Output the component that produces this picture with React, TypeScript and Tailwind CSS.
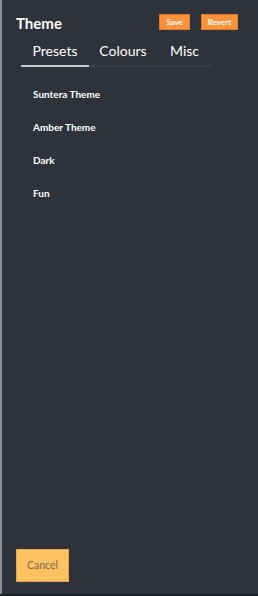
import { useState } from "react";

const presets = ["Suntera Theme", "Amber Theme", "Dark", "Fun"];
const tabs = ["Presets", "Colours", "Misc"];

export default function App() {
  const [tab, setTab] = useState(0);
  return (
    <div className="w-[258px] h-[596px] bg-[#1e2126] font-['Lato',sans-serif]">
      <div className="h-[594px] bg-[#2e323a] border-l-2 border-[#8a8d92] flex flex-col">
        {/* Header */}
        <div className="flex items-center pl-[14px] pr-5 pt-[14px] h-[30px]">
          <h2 className="text-white font-bold text-[15px] leading-none mt-[3px] flex-1">Theme</h2>
          <button className="bg-[#fb923c] border border-[#e07a2c] text-white font-bold text-[8px] h-4 w-[31px] leading-none">
            Save
          </button>
          <button className="bg-[#fb923c] border border-[#e07a2c] text-white font-bold text-[8px] h-4 w-[37px] ml-[11px] leading-none">
            Revert
          </button>
        </div>

        {/* Tabs */}
        <div className="ml-[19px] w-[191px] mt-[10px]">
          <div className="flex">
            {tabs.map((t, i) => (
              <button
                key={t}
                onClick={() => setTab(i)}
                className={`text-white text-[14px] leading-none h-[21px] pt-[1px] ${i === 2 ? "w-[55px]" : "w-[68px]"}`}
              >
                {t}
              </button>
            ))}
          </div>
          <div className="h-[2px] mt-[4px] bg-[#3a3d43] flex">
            <div className="h-[2px] w-[68px] bg-[#c9c9c9]" />
          </div>
        </div>

        {/* Presets list */}
        <div className="flex flex-col pl-[31px] pt-[22px] gap-[22px] flex-1">
          {tab === 0 &&
            presets.map((p) => (
              <div key={p} className="text-white font-bold text-[10px] leading-[11px]">
                {p}
              </div>
            ))}
        </div>

        {/* Footer */}
        <div className="pl-[14px] pb-[12px]">
          <button className="w-[53px] h-[33px] bg-[#fec260] border border-[#e9a54a] text-[#7b6b5a] text-[10.5px]">
            Cancel
          </button>
        </div>
      </div>
    </div>
  );
}
